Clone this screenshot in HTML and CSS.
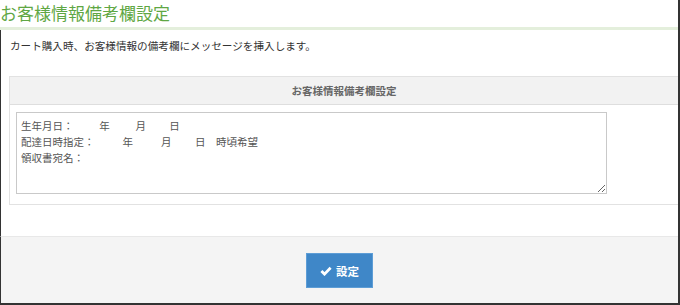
FILE: index.html
```html
<!DOCTYPE html>
<html lang="ja">
<head>
    <meta charset="UTF-8">
    <title>お客様情報備考欄設定</title>
    <link rel="stylesheet" href="styles.css">
</head>
<body>
    <div class="frame">
        <h1 class="pageTitle">お客様情報備考欄設定</h1>

        <div class="content">
            <p class="description">カート購入時、お客様情報の備考欄にメッセージを挿入します。</p>

            <div class="settingBox">
                <div class="settingHeader">お客様情報備考欄設定</div>
                <div class="settingBody">
                    <textarea class="memoInput" spellcheck="false">生年月日：　　  年　　  月　　 日
配達日時指定：　　   年　　   月　　 日　時頃希望
領収書宛名：</textarea>
                </div>
            </div>
        </div>

        <div class="footer">
            <button class="submitButton">
                <svg class="checkIcon" viewBox="0 0 12 10" width="12" height="10">
                    <polyline points="1.4,5 4.5,8.1 10.6,1.8" fill="none" stroke="#fff" stroke-width="2.8" stroke-linejoin="miter"/>
                </svg>
                設定
            </button>
        </div>
    </div>
</body>
</html>
```

FILE: styles.css
```css
body {
    margin: 0;
    padding: 0;
    background-color: #fff;
    font-family: "Noto Sans CJK JP", "Liberation Sans", sans-serif;
    color: #333;
}

.frame {
    width: 678px;
    height: 303px;
    border-right: 2px solid #333;
    border-bottom: 2px solid #333;
    display: flex;
    flex-direction: column;
}

.pageTitle {
    margin: 0;
    height: 27px;
    line-height: 26px;
    font-size: 17px;
    font-weight: normal;
    color: #5fa744;
    border-bottom: 3px solid #e4efdc;
    white-space: nowrap;
}

.content {
    border-left: 1px solid #333;
    padding: 8px 0 31px 8px;
}

.description {
    margin: 0 0 22px 1px;
    font-size: 10.6px;
    line-height: 16px;
}

.settingBox {
    border: 1px solid #e2e2e2;
    border-right: none;
}

.settingHeader {
    height: 27px;
    line-height: 27px;
    background-color: #f2f2f2;
    border-bottom: 1px solid #dedede;
    text-align: center;
    font-size: 10.5px;
    font-weight: bold;
    color: #666;
}

.settingBody {
    padding: 7px 0 10px 6px;
}

.memoInput {
    display: block;
    box-sizing: border-box;
    width: 591px;
    height: 82px;
    margin: 0;
    padding: 5px 4px;
    border: 1px solid #c9c9c9;
    font-family: "Noto Sans CJK JP", sans-serif;
    font-size: 10.5px;
    line-height: 16px;
    color: #555;
    resize: vertical;
}

.footer {
    flex: 1;
    border-left: 1px solid #333;
    border-top: 1px solid #e8e8e8;
    background-color: #f4f4f4;
    display: flex;
    justify-content: center;
    align-items: flex-start;
    padding-top: 16px;
}

.submitButton {
    display: flex;
    align-items: center;
    justify-content: center;
    gap: 4px;
    width: 67px;
    height: 35px;
    padding: 0;
    background-color: #3f87c8;
    border: 1px solid #5d9dd6;
    color: #fff;
    font-family: "Noto Sans CJK JP", sans-serif;
    font-size: 11.5px;
    font-weight: bold;
    cursor: pointer;
}
```
